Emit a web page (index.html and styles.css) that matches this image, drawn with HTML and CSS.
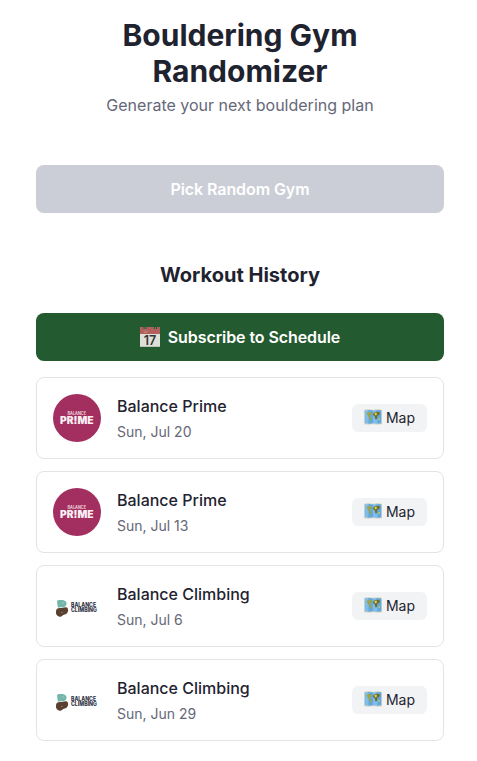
FILE: index.html
```html
<!DOCTYPE html>
<html lang="en">
<head>
<meta charset="utf-8">
<title>Bouldering Gym Randomizer</title>
<link rel="stylesheet" href="styles.css">
</head>
<body>
<svg class="defs" aria-hidden="true">
  <symbol id="map" viewBox="0 0 18 16">
    <path d="M0 .8 4.500 0 9 .8l4.500-.8L18 .8v14.400l-4.500.5-4.500-.5-4.500.5-4.500-.5z" fill="#d9d5c7"/>
    <path d="M.8 1.500 4.500 1 9 1.500l4.500-.5 3.700.5v12.800l-3.700.5-4.500-.5-4.500.5-3.700-.5z" fill="#7dbdec"/>
    <path d="M4.500 1 9 1.500v12.800l-4.500.5zM13.500 1l3.700.5v12.800l-3.700.5z" fill="#4b91c8" opacity=".5"/>
    <path d="M2.500 4 5 3l3 .5-.5 2L6 6.500 7.500 9l-.8 3-1-1L5 8 3.500 6z" fill="#9fa348"/>
    <path d="m9.500 4 3-1.500 3.500 1L15 6.500l-1.500-.5-.5 4-1.500.5-1-3.500L9 6z" fill="#6b6d2c"/>
    <path d="m10.500 4 2-.5.500 2-2 1zM14.500 9l1.500.5-.5 1.500-1-.5z" fill="#dfd554"/>
  </symbol>
  <symbol id="prime" viewBox="0 0 48 48">
    <circle cx="24" cy="24" r="24" fill="#a32f60"/>
    <text x="14.500" y="21" textLength="18.500" lengthAdjust="spacingAndGlyphs" class="prime-small">BALANCE</text>
    <text x="7" y="30" textLength="33.500" lengthAdjust="spacingAndGlyphs" class="prime-large">PR!ME</text>
  </symbol>
  <symbol id="climbing" viewBox="0 0 48 48">
    <path d="M4 19.500Q4 18 6 18h2.500c4 0 6 2.500 4.800 5-1 2.200-3 2.500-5 2.200-1.800-.2-3 .8-3.500 0z" fill="#72b7a9"/>
    <path d="M3 29.500c0-2.500 1.500-3.500 4-3.500 2.500 0 4-1 6-.8 2.500.2 2.800 3.800 1 6C12.500 33 10.500 32 9 34c-1 1.200-3.500.8-5-.8C2.800 32 3 31 3 29.500z" fill="#59402f"/>
    <path d="M9.500 20.500h.9v.9h-.9zM8.500 30h.8v.8h-.8z" fill="#e0e7e2"/>
    <text x="18" y="24.600" textLength="25" lengthAdjust="spacingAndGlyphs" class="climbing-text">BALANCE</text>
    <text x="18" y="30" textLength="26" lengthAdjust="spacingAndGlyphs" class="climbing-text">CLIMBING</text>
  </symbol>
</svg>
<main class="page">
  <header class="header">
    <h1 class="title">Bouldering Gym Randomizer</h1>
    <p class="subtitle">Generate your next bouldering plan</p>
  </header>
  <button class="button pick" disabled>Pick Random Gym</button>
  <h2 class="section-title">Workout History</h2>
  <button class="button subscribe">
    <svg class="calendar" viewBox="0 0 20 20" aria-hidden="true">
      <path d="M0 0h20v20H0z" fill="#dedfd9"/>
      <path d="M0 0h20v7H0z" fill="#b0605d"/>
      <path d="M3.500 0h3v2h-3zM14 0h3v2h-3z" fill="#24592f"/>
      <path d="M4.500 0h1v2h-1zM15 0h1v2h-1z" fill="#8c7770"/>
      <path d="M4 4h4M4 5.500h3" stroke="#d38b85" stroke-width=".6"/>
      <path d="M0 19h20v1H0z" fill="#b9c1b9"/>
      <text x="10" y="17.700" text-anchor="middle" class="calendar-day">17</text>
    </svg>
    <span>Subscribe to Schedule</span>
  </button>
  <section class="history">
    <article class="card">
      <svg class="logo"><use href="#prime"/></svg>
      <div class="details"><h3 class="name">Balance Prime</h3><p class="date">Sun, Jul 20</p></div>
      <button class="map-button"><svg class="map-icon"><use href="#map"/></svg>Map</button>
    </article>
    <article class="card">
      <svg class="logo"><use href="#prime"/></svg>
      <div class="details"><h3 class="name">Balance Prime</h3><p class="date">Sun, Jul 13</p></div>
      <button class="map-button"><svg class="map-icon"><use href="#map"/></svg>Map</button>
    </article>
    <article class="card">
      <svg class="logo"><use href="#climbing"/></svg>
      <div class="details"><h3 class="name">Balance Climbing</h3><p class="date">Sun, Jul 6</p></div>
      <button class="map-button"><svg class="map-icon"><use href="#map"/></svg>Map</button>
    </article>
    <article class="card">
      <svg class="logo"><use href="#climbing"/></svg>
      <div class="details"><h3 class="name">Balance Climbing</h3><p class="date">Sun, Jun 29</p></div>
      <button class="map-button"><svg class="map-icon"><use href="#map"/></svg>Map</button>
    </article>
  </section>
</main>
</body>
</html>
```
FILE: styles.css
```css
* { box-sizing: border-box; margin: 0; }
body { background: #fff; color: #1f2330; font: 16px/24px Inter, sans-serif; }
.defs { display: none; }
.page { padding: 17px 33px 20px 36px; }
.header { text-align: center; margin-bottom: 48px; }
.title { font-size: 30px; line-height: 36px; font-weight: 700; }
.subtitle { margin-top: 4px; color: #666878; }
.button { display: flex; align-items: center; justify-content: center; gap: 8px; width: 100%; height: 48px; border: 0; border-radius: 8px; color: #fff; font: 600 16px/24px Inter, sans-serif; letter-spacing: -.08px; }
.pick { background: #cbced6; }
.section-title { margin: 48px 0 24px; text-align: center; font-size: 20px; line-height: 28px; font-weight: 700; }
.subscribe { background: #245a2f; }
.calendar { width: 20px; height: 20px; }
.calendar-day { font: 600 12.5px Inter, sans-serif; letter-spacing: 0; fill: #333735; }
.history { display: flex; flex-direction: column; gap: 12px; margin-top: 16px; }
.card { display: flex; align-items: center; gap: 16px; height: 82px; padding: 16px; border: 1px solid #e3e4e8; border-radius: 8px; }
.logo { width: 48px; height: 48px; flex: none; }
.details { flex: 1; }
.name { font-size: 16px; line-height: 24px; font-weight: 500; }
.date { margin-top: 4px; font-size: 14px; line-height: 20px; color: #666878; }
.map-button { display: flex; align-items: center; justify-content: center; gap: 4px; width: 75px; height: 28px; padding: 0; border: 0; border-radius: 6px; background: #f2f3f5; color: #1f2330; font: 14px/20px Inter, sans-serif; }
.map-icon { width: 18px; height: 16px; margin-bottom: 2px; }
.prime-small { font: 700 4.4px Inter, sans-serif; fill: #edd0dc; }
.prime-large { font: 900 10px Inter, sans-serif; fill: #faf0f4; }
.climbing-text { font: 800 5.6px Inter, sans-serif; fill: #303247; }
```
